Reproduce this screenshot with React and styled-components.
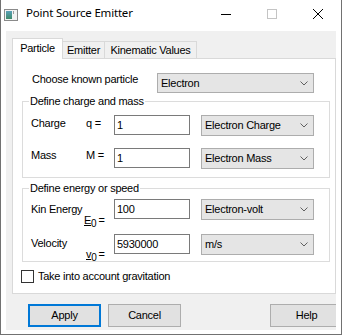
import styled, { createGlobalStyle } from "styled-components";

const GlobalStyle = createGlobalStyle`
  html, body {
    margin: 0;
    padding: 0;
    background: #fff;
  }
  body {
    font-family: "Liberation Sans", Arial, sans-serif;
    font-size: 11px;
    letter-spacing: -0.25px;
    color: #000;
  }
  * {
    box-sizing: border-box;
  }
`;

const Window = styled.div`
  width: 342px;
  height: 335px;
  display: flex;
  flex-direction: column;
  background: #fff;
  border: 1px solid #717171;
  border-top: none;
`;

const TitleBar = styled.div`
  height: 31px;
  flex-shrink: 0;
  display: flex;
  align-items: flex-start;
`;

const AppIcon = styled.svg`
  margin: 9px 0 0 3px;
  flex-shrink: 0;
`;

const Title = styled.div`
  margin: 5px 0 0 8px;
  font-family: "Noto Sans", "Liberation Sans", sans-serif;
  font-size: 11.5px;
  letter-spacing: -0.2px;
  line-height: 16px;
`;

const Caption = styled.div`
  margin-left: auto;
  display: flex;
`;

const CaptionButton = styled.div`
  width: 46px;
  height: 27px;
  display: flex;
  align-items: center;
  justify-content: center;
`;

const Client = styled.div`
  flex: 1;
  display: flex;
  padding: 0 5px 4px 5px;
  min-height: 0;
`;

const Form = styled.div`
  flex: 1;
  background: #f0f0f0;
  overflow: hidden;
  padding: 7px 0 0 6px;
  display: flex;
  flex-direction: column;
`;

const Tabs = styled.div`
  height: 20px;
  display: flex;
  align-items: flex-start;
  position: relative;
  z-index: 1;
`;

const Tab = styled.div`
  width: ${(p) => p.$width}px;
  height: ${(p) => (p.$active ? 21 : 17)}px;
  margin-top: ${(p) => (p.$active ? 0 : 3)}px;
  margin-left: ${(p) => (p.$first ? 0 : -1)}px;
  padding-top: ${(p) => (p.$active ? 3 : 2)}px;
  background: ${(p) => (p.$active ? "#fff" : "#f0f0f0")};
  border: 1px solid #d9d9d9;
  border-bottom: none;
  text-align: center;
  line-height: 13px;
  white-space: nowrap;
  position: relative;
  z-index: ${(p) => (p.$active ? 2 : 1)};
`;

const TabPanel = styled.div`
  width: 324px;
  height: 236px;
  flex-shrink: 0;
  background: #fff;
  border: 1px solid #d9d9d9;
  padding-top: 14px;
  position: relative;
`;

const ChooseRow = styled.div`
  display: flex;
  align-items: flex-start;
  padding-left: 19px;
`;

const Label = styled.div`
  width: ${(p) => p.$width}px;
  flex-shrink: 0;
  line-height: 13px;
  margin-top: ${(p) => p.$top || 0}px;
  white-space: nowrap;
`;

const ComboBox = styled.div`
  width: ${(p) => p.$width}px;
  height: ${(p) => p.$height || 21}px;
  margin-left: ${(p) => p.$ml || 0}px;
  flex-shrink: 0;
  background: #e5e5e5;
  border: 1px solid #adadad;
  padding: 0 5px 0 3px;
  display: flex;
  align-items: center;
  line-height: 13px;

  svg {
    margin-left: auto;
  }
`;

const Group = styled.fieldset`
  width: 308px;
  margin: ${(p) => p.$mt}px 0 0 9px;
  padding: ${(p) => p.$pt}px 0 ${(p) => p.$pb}px 0;
  border: 1px solid #dcdcdc;
  min-inline-size: 0;
`;

const Legend = styled.legend`
  margin-left: 6px;
  padding: 0 1px;
  line-height: 13px;
`;

const FieldRow = styled.div`
  height: 21px;
  display: flex;
  align-items: flex-start;
  padding-left: 8px;
  margin-top: ${(p) => p.$gap || 0}px;
`;

const TextBox = styled.div`
  width: 76px;
  height: 20px;
  flex-shrink: 0;
  border: 1px solid #7a7a7a;
  background: #fff;
  padding-left: 2px;
  line-height: 18px;
`;

const Under = styled.span`
  text-decoration: underline;
`;

const Sub = styled.span`
  font-size: 10px;
  position: relative;
  top: 3px;
  margin-right: 2px;
`;

const CheckRow = styled.label`
  display: flex;
  align-items: flex-start;
  gap: 4px;
  margin: 8px 0 0 8px;
  line-height: 13px;
`;

const CheckBox = styled.span`
  width: 13px;
  height: 13px;
  border: 1px solid #333;
  background: #fff;
  flex-shrink: 0;
`;

const ButtonRow = styled.div`
  display: flex;
  margin-top: 10px;
  padding-left: 16px;
`;

const Button = styled.div`
  width: 73px;
  height: 23px;
  flex-shrink: 0;
  margin-left: ${(p) => p.$ml || 0}px;
  background: #e1e1e1;
  border: ${(p) => (p.$default ? "2px solid #0078d7" : "1px solid #adadad")};
  display: flex;
  align-items: center;
  justify-content: center;
  line-height: 13px;
`;

const Chevron = () => (
  <svg width="8" height="5" viewBox="0 0 8 5">
    <polyline points="0.5,0.5 4,4 7.5,0.5" fill="none" stroke="#606060" strokeWidth="1" />
  </svg>
);

const Combo = ({ width, height, ml, children }) => (
  <ComboBox $width={width} $height={height} $ml={ml}>
    <span>{children}</span>
    <Chevron />
  </ComboBox>
);

const App = () => (
  <>
    <GlobalStyle />
    <Window>
      <TitleBar>
        <AppIcon width="14" height="12" viewBox="0 0 14 12">
          <defs>
            <linearGradient id="ico" x1="0" y1="0" x2="0" y2="1">
              <stop offset="0" stopColor="#5aa0b8" />
              <stop offset="1" stopColor="#3d8a6a" />
            </linearGradient>
          </defs>
          <rect x="0.5" y="0.5" width="13" height="11" fill="#f2f2f2" stroke="#8a8a8a" />
          <rect x="2" y="2" width="6" height="8" fill="url(#ico)" />
          <rect x="9" y="2" width="1" height="3" fill="#9a9a9a" />
        </AppIcon>
        <Title>Point Source Emitter</Title>
        <Caption>
          <CaptionButton>
            <svg width="10" height="10" viewBox="0 0 10 10">
              <line x1="0" y1="5.5" x2="10" y2="5.5" stroke="#000" />
            </svg>
          </CaptionButton>
          <CaptionButton>
            <svg width="10" height="10" viewBox="0 0 10 10">
              <rect x="0.5" y="0.5" width="9" height="9" fill="none" stroke="#c4c4c4" />
            </svg>
          </CaptionButton>
          <CaptionButton>
            <svg width="10" height="10" viewBox="0 0 10 10">
              <path d="M0 0 L10 10 M10 0 L0 10" stroke="#000" strokeWidth="1" />
            </svg>
          </CaptionButton>
        </Caption>
      </TitleBar>

      <Client>
        <Form>
          <Tabs>
            <Tab $active $first $width={51}>Particle</Tab>
            <Tab $width={43}>Emitter</Tab>
            <Tab $width={93}>Kinematic Values</Tab>
          </Tabs>

          <TabPanel>
            <ChooseRow>
              <Label $width={125}>Choose known particle</Label>
              <Combo width={157} height={20}>Electron</Combo>
            </ChooseRow>

            <Group $mt={2} $pt={7} $pb={8}>
              <Legend>Define charge and mass</Legend>
              <FieldRow>
                <Label $width={55} $top={2}>Charge</Label>
                <Label $width={28} $top={2}>q =</Label>
                <TextBox>1</TextBox>
                <Combo width={113} ml={11}>Electron Charge</Combo>
              </FieldRow>
              <FieldRow $gap={12}>
                <Label $width={55} $top={1}>Mass</Label>
                <Label $width={28} $top={1}>M =</Label>
                <TextBox>1</TextBox>
                <Combo width={113} ml={11}>Electron Mass</Combo>
              </FieldRow>
            </Group>

            <Group $mt={4} $pt={4} $pb={6}>
              <Legend>Define energy or speed</Legend>
              <FieldRow>
                <Label $width={53} $top={4}>Kin Energy</Label>
                <Label $width={30} $top={15}>
                  <Under>E</Under>
                  <Sub>0</Sub>=
                </Label>
                <TextBox>100</TextBox>
                <Combo width={113} ml={11}>Electron-volt</Combo>
              </FieldRow>
              <FieldRow $gap={14}>
                <Label $width={55} $top={3}>Velocity</Label>
                <Label $width={28} $top={14}>
                  <Under>v</Under>
                  <Sub>0</Sub>=
                </Label>
                <TextBox>5930000</TextBox>
                <Combo width={113} ml={11}>m/s</Combo>
              </FieldRow>
            </Group>

            <CheckRow>
              <CheckBox />
              <span>Take into account gravitation</span>
            </CheckRow>
          </TabPanel>

          <ButtonRow>
            <Button $default>Apply</Button>
            <Button $ml={7}>Cancel</Button>
            <Button $ml={89}>Help</Button>
          </ButtonRow>
        </Form>
      </Client>
    </Window>
  </>
);

export default App;
